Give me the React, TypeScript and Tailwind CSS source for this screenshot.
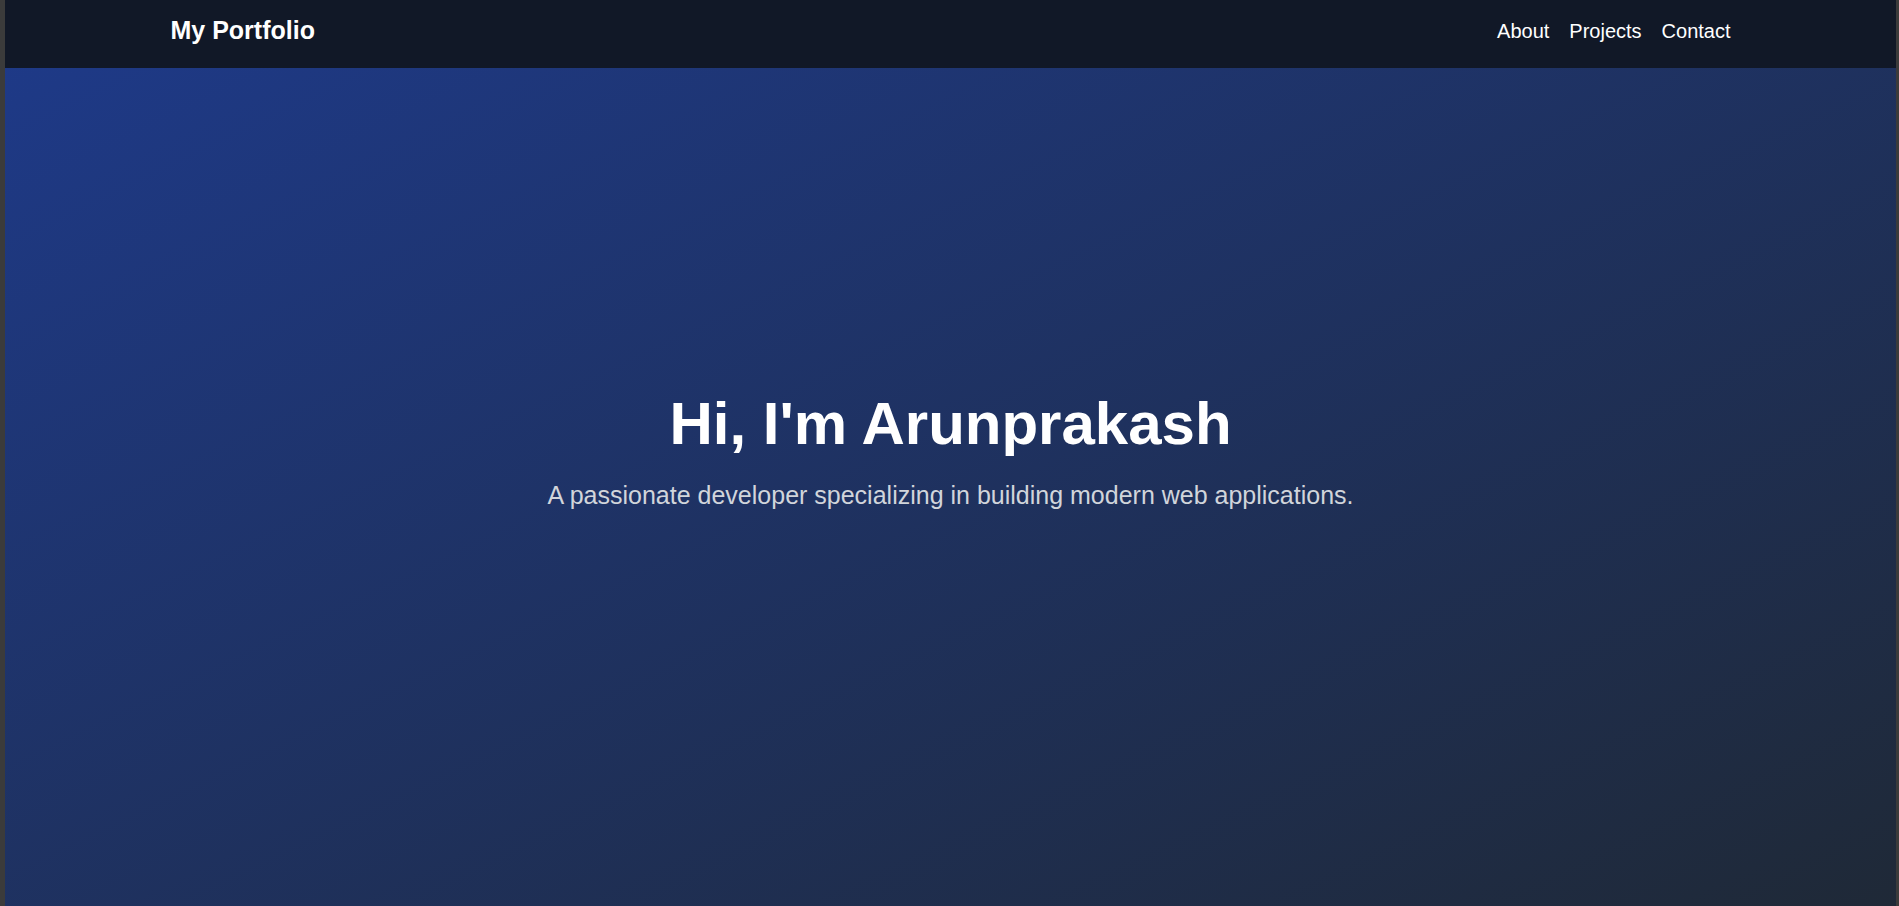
import React from "react";

export default function App() {
  return (
    <div className="flex h-[906px] w-full bg-[#3b3b3b] pl-[5px] pr-[3px]" style={{ fontFamily: '"Liberation Sans", Arial, sans-serif' }}>
      <div className="relative flex-1 h-full overflow-hidden">
        <section className="flex h-full w-full flex-col items-center justify-center bg-[linear-gradient(to_bottom_right,#1e3a8a,#1f2937)] text-center">
          <h1 className="text-[60px] font-bold leading-[60px] text-white">Hi, I'm Arunprakash</h1>
          <p className="mt-6 text-[25px] leading-[35px] text-[#d1d5db]">
            A passionate developer specializing in building modern web applications.
          </p>
        </section>
        <header className="absolute inset-x-0 top-0 h-[68px] bg-[#111827]">
          <div className="mx-auto flex h-full max-w-[1600px] items-center justify-between px-5 pb-[7px]">
            <span className="text-[25px] font-bold leading-[35px] text-white">My Portfolio</span>
            <nav className="flex gap-5 text-[20px] leading-[30px] text-white">
              <a href="#about">About</a>
              <a href="#projects">Projects</a>
              <a href="#contact">Contact</a>
            </nav>
          </div>
        </header>
      </div>
    </div>
  );
}
